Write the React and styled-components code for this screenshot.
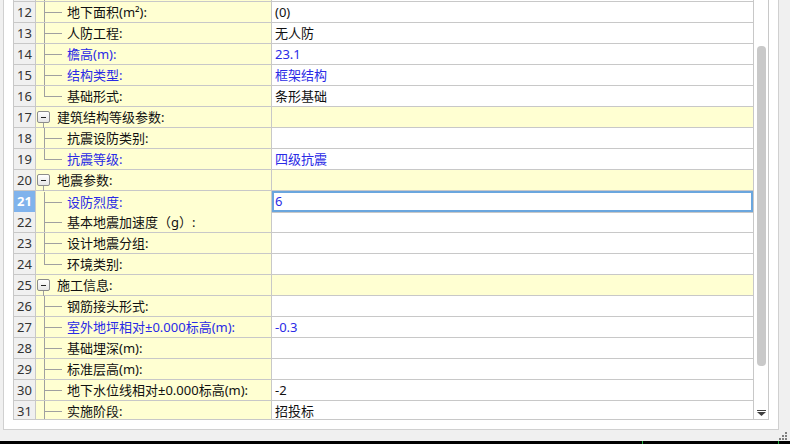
import React from 'react';
import styled, { createGlobalStyle, css } from 'styled-components';

const GlobalStyle = createGlobalStyle`
  html, body { margin: 0; padding: 0; background: #f0f0f0; overflow: hidden; }
  body { font-family: "Segoe UI", "Noto Sans", "Noto Sans CJK SC", sans-serif; }
`;

const GRID = '#c8c8c8';
const TREE = '#a0a0a0';
const YELLOW = '#ffffd2';
const BLUE = '#2a2ae6';

const rows = [
  { no: '', label: '', value: '' },
  { no: 12, label: '地下面积(m²):', value: '(0)' },
  { no: 13, label: '人防工程:', value: '无人防' },
  { no: 14, label: '檐高(m):', value: '23.1', blue: true },
  { no: 15, label: '结构类型:', value: '框架结构', blue: true },
  { no: 16, label: '基础形式:', value: '条形基础', last: true },
  { no: 17, label: '建筑结构等级参数:', group: true },
  { no: 18, label: '抗震设防类别:', value: '' },
  { no: 19, label: '抗震等级:', value: '四级抗震', blue: true, last: true },
  { no: 20, label: '地震参数:', group: true },
  { no: 21, label: '设防烈度:', value: '6', blue: true, selected: true },
  { no: 22, label: '基本地震加速度（g）:', value: '' },
  { no: 23, label: '设计地震分组:', value: '' },
  { no: 24, label: '环境类别:', value: '', last: true },
  { no: 25, label: '施工信息:', group: true },
  { no: 26, label: '钢筋接头形式:', value: '' },
  { no: 27, label: '室外地坪相对±0.000标高(m):', value: '-0.3', blue: true },
  { no: 28, label: '基础埋深(m):', value: '' },
  { no: 29, label: '标准层高(m):', value: '' },
  { no: 30, label: '地下水位线相对±0.000标高(m):', value: '-2' },
  { no: 31, label: '实施阶段:', value: '招投标' },
];

const Screen = styled.div`
  width: 790px;
  height: 444px;
  display: flex;
  flex-direction: column;
`;

const Panel = styled.div`
  flex: none;
  margin-left: 3px;
  width: 776px;
  height: 430px;
  box-sizing: border-box;
  background: #fff;
  border: 1px solid #d0d0d0;
  border-top: none;
  padding: 0 9px 9px 9px;
`;

const Table = styled.div`
  height: 420px;
  box-sizing: border-box;
  border: 1px solid ${GRID};
  border-top: none;
  display: flex;
  overflow: hidden;
`;

const Viewport = styled.div`
  flex: 1;
  height: 100%;
  min-height: 0;
  overflow: hidden;
`;

const Rows = styled.div`
  margin-top: -19px;
`;

const Row = styled.div`
  display: grid;
  grid-template-columns: 22px 236px 1fr;
  height: 21px;
`;

const NumCell = styled.div`
  box-sizing: border-box;
  border-right: 1px solid ${GRID};
  border-bottom: 1px solid ${GRID};
  background: ${(p) => (p.$selected ? '#80b3ec' : '#f0f0f0')};
  color: ${(p) => (p.$selected ? '#fff' : '#333')};
  font-weight: ${(p) => (p.$selected ? 700 : 400)};
  font-size: 13px;
  line-height: 20px;
  text-align: center;
`;

const TreeCell = styled.div`
  box-sizing: border-box;
  border-right: 1px solid ${GRID};
  border-bottom: 1px solid ${GRID};
  background: ${YELLOW};
  display: flex;
  align-items: center;
  font-size: 13px;
  line-height: 20px;
  white-space: nowrap;
  color: ${(p) => (p.$blue ? BLUE : '#111')};
`;

const ValueCell = styled.div`
  box-sizing: border-box;
  border-bottom: 1px solid ${GRID};
  background: ${(p) => (p.$group ? YELLOW : '#fff')};
  padding-left: 3px;
  font-size: 13px;
  line-height: 20px;
  color: ${(p) => (p.$blue ? BLUE : '#111')};
  ${(p) =>
    p.$selected &&
    css`
      box-shadow: inset 0 0 0 2px #6aa6de;
      height: 22px;
      position: relative;
      z-index: 1;
    `}
`;

const ExpandBox = styled.span`
  position: relative;
  box-sizing: border-box;
  width: 13px;
  height: 12px;
  margin: 0 7px 0 1px;
  border: 1px solid #8c8c8c;
  border-radius: 2px;
  background: linear-gradient(#ffffff, #e6e6e6);
  display: flex;
  align-items: center;
  justify-content: center;

  &::before {
    content: '';
    width: 5px;
    height: 1px;
    background: #222;
  }

  &::after {
    content: '';
    position: absolute;
    left: 5px;
    top: 11px;
    width: 1px;
    height: 5px;
    background: ${TREE};
  }
`;

const Label = styled.span``;

const Scrollbar = styled.div`
  width: 14px;
  border-left: 1px solid ${GRID};
  display: flex;
  flex-direction: column;
  align-items: center;
  padding-top: 46px;
`;

const Thumb = styled.div`
  width: 9px;
  height: 320px;
  background: #c9c9c9;
  border-radius: 4px;
  margin-left: 1px;
`;

const ArrowBox = styled.div`
  margin-top: auto;
  margin-bottom: 3px;
  margin-left: 1px;
  display: flex;
`;

const Footer = styled.div`
  flex: none;
  height: 11px;
  display: flex;
  justify-content: flex-end;
  align-items: flex-end;
  padding-right: 2px;
`;

const Strip = styled.div`
  flex: none;
  height: 3px;
  background:
    linear-gradient(90deg, transparent 642px, #1fae3a 642px, #1fae3a 643px, transparent 643px),
    linear-gradient(90deg, transparent 778px, #1fae3a 778px, #1fae3a 779px, transparent 779px),
    #000;
`;

const Connector = ({ last }) => (
  <svg width="31" height="20" style={{ flex: 'none' }}>
    <line x1="8.5" y1="0" x2="8.5" y2={last ? 10 : 20} stroke={TREE} />
    <line x1="8" y1="10.5" x2="26" y2="10.5" stroke={TREE} />
  </svg>
);

const Grip = () => (
  <svg width="10" height="10">
    {[
      [7, 1],
      [4, 4],
      [7, 4],
      [1, 7],
      [4, 7],
      [7, 7],
    ].map(([x, y]) => (
      <rect key={`${x}-${y}`} x={x} y={y} width="2" height="2" fill="#808080" />
    ))}
  </svg>
);

const App = () => (
  <>
    <GlobalStyle />
    <Screen>
      <Panel>
        <Table>
          <Viewport>
            <Rows>
              {rows.map((r, i) => (
                <Row key={i}>
                  <NumCell $selected={r.selected}>{r.no}</NumCell>
                  <TreeCell $blue={r.blue}>
                    {r.group ? <ExpandBox /> : <Connector last={r.last} />}
                    <Label>{r.label}</Label>
                  </TreeCell>
                  <ValueCell $group={r.group} $blue={r.blue} $selected={r.selected}>
                    {r.value}
                  </ValueCell>
                </Row>
              ))}
            </Rows>
          </Viewport>
          <Scrollbar>
            <Thumb />
            <ArrowBox>
              <svg width="9" height="6">
                <rect x="0" y="0" width="9" height="1" fill="#404040" />
                <polygon points="0,2 9,2 4.5,6" fill="#404040" />
              </svg>
            </ArrowBox>
          </Scrollbar>
        </Table>
      </Panel>
      <Footer>
        <Grip />
      </Footer>
      <Strip />
    </Screen>
  </>
);

export default App;
